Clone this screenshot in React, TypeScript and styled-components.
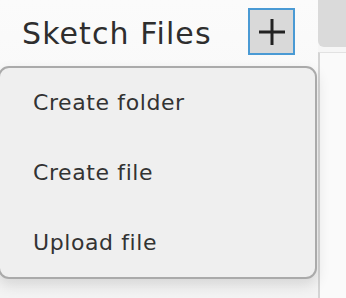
import styled, { createGlobalStyle } from 'styled-components'

const GlobalStyle = createGlobalStyle`
  html, body {
    margin: 0;
    padding: 0;
    background: #f6f6f6;
    font-family: "DejaVu Sans", "Open Sans", sans-serif;
    color: #333333;
  }
  * {
    box-sizing: border-box;
  }
`

const menuItems = ['Create folder', 'Create file', 'Upload file']

function App() {
  return (
    <>
      <GlobalStyle />
      <Layout>
        <Sidebar>
          <Header>
            <Title>Sketch Files</Title>
            <AddButton aria-label="add">
              <svg width="28" height="28" viewBox="0 0 28 28">
                <path d="M14 1 V27 M1 14 H27" stroke="#222" strokeWidth="3" fill="none" />
              </svg>
            </AddButton>
          </Header>
          <Menu>
            {menuItems.map(item => (
              <MenuItem key={item}>{item}</MenuItem>
            ))}
          </Menu>
        </Sidebar>
        <Main>
          <Toolbar />
          <Editor />
        </Main>
      </Layout>
    </>
  )
}

const Layout = styled.div`
  display: flex;
  width: 100vw;
  height: 100vh;
  overflow: hidden;
`
const Sidebar = styled.aside`
  position: relative;
  width: 318px;
  flex-shrink: 0;
  background: linear-gradient(180deg, #fbfbfb 0%, #f3f3f3 100%);
`
const Header = styled.div`
  display: flex;
  align-items: center;
  justify-content: space-between;
  height: 64px;
  padding: 0 23px 0 22px;
`
const Title = styled.h1`
  margin: 0;
  margin-top: 2px;
  font-size: 30px;
  font-weight: 400;
  color: #2e2e2e;
  letter-spacing: 1.1px;
`
const AddButton = styled.button`
  width: 47px;
  height: 47px;
  margin-top: -1px;
  padding: 0;
  display: flex;
  align-items: center;
  justify-content: center;
  background: #d9d9d9;
  border: 2px solid #4a9ad4;
  border-radius: 0;
  cursor: pointer;
`
const Menu = styled.ul`
  position: absolute;
  top: 66px;
  left: -2px;
  width: 319px;
  height: 213px;
  margin: 0;
  padding: 0;
  list-style: none;
  display: flex;
  flex-direction: column;
  justify-content: space-around;
  background: #efefef;
  border: 2px solid #aaaaaa;
  border-radius: 11px;
  box-shadow: 0 6px 14px rgba(0, 0, 0, 0.12);
`
const MenuItem = styled.li`
  padding-left: 33px;
  font-size: 22px;
  letter-spacing: 0.6px;
  color: #333333;
  cursor: pointer;
`
const Main = styled.main`
  flex: 1;
  display: flex;
  flex-direction: column;
  gap: 5px;
`
const Toolbar = styled.div`
  height: 47px;
  background: #dadada;
  border-bottom-left-radius: 6px;
`
const Editor = styled.div`
  flex: 1;
  background: #fafafa;
  border-left: 2px solid #d4d4d4;
  border-top: 1px solid #e2e2e2;
`

export default App
